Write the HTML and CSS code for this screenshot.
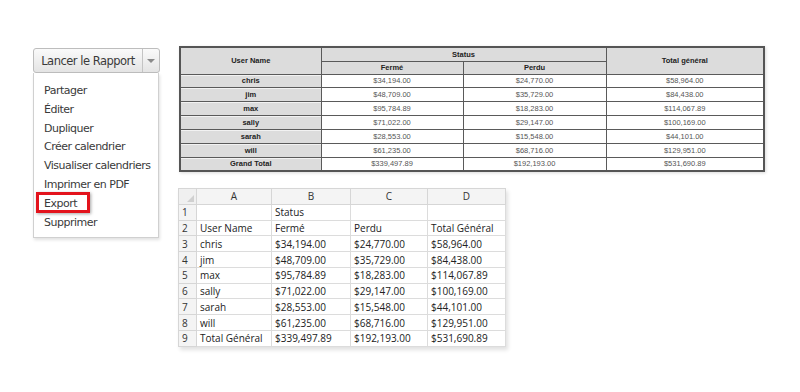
FILE: index.html
```html
<!DOCTYPE html>
<html lang="fr">
<head>
<meta charset="utf-8">
<title>Rapport</title>
<link rel="stylesheet" href="styles.css">
</head>
<body>
<div class="page">
  <div class="left">
    <div class="btn-group">
      <div class="btn-main">Lancer le Rapport</div>
      <div class="btn-caret"><span class="caret"></span></div>
    </div>
    <ul class="menu">
      <li>Partager</li>
      <li>Éditer</li>
      <li>Dupliquer</li>
      <li>Créer calendrier</li>
      <li>Visualiser calendriers</li>
      <li>Imprimer en PDF</li>
      <li class="hl">Export</li>
      <li>Supprimer</li>
    </ul>
  </div>
  <div class="right">
    <table class="report">
      <colgroup><col class="c1"><col class="c2"><col class="c3"><col class="c4"></colgroup>
      <thead>
        <tr class="h1"><th rowspan="2">User Name</th><th colspan="2">Status</th><th rowspan="2">Total général</th></tr>
        <tr class="h2"><th>Fermé</th><th>Perdu</th></tr>
      </thead>
      <tbody>
        <tr><th>chris</th><td>$34,194.00</td><td>$24,770.00</td><td>$58,964.00</td></tr>
        <tr><th>jim</th><td>$48,709.00</td><td>$35,729.00</td><td>$84,438.00</td></tr>
        <tr><th>max</th><td>$95,784.89</td><td>$18,283.00</td><td>$114,067.89</td></tr>
        <tr><th>sally</th><td>$71,022.00</td><td>$29,147.00</td><td>$100,169.00</td></tr>
        <tr><th>sarah</th><td>$28,553.00</td><td>$15,548.00</td><td>$44,101.00</td></tr>
        <tr><th>will</th><td>$61,235.00</td><td>$68,716.00</td><td>$129,951.00</td></tr>
        <tr><th>Grand Total</th><td>$339,497.89</td><td>$192,193.00</td><td>$531,690.89</td></tr>
      </tbody>
    </table>

    <table class="sheet">
      <colgroup><col class="rn"><col class="ca"><col class="cb"><col class="cc"><col class="cd"></colgroup>
      <thead>
        <tr><th class="corner"><span class="tri"></span></th><th>A</th><th>B</th><th>C</th><th>D</th></tr>
      </thead>
      <tbody>
        <tr><th>1</th><td></td><td>Status</td><td></td><td></td></tr>
        <tr><th>2</th><td>User Name</td><td>Fermé</td><td>Perdu</td><td>Total Général</td></tr>
        <tr><th>3</th><td>chris</td><td>$34,194.00</td><td>$24,770.00</td><td>$58,964.00</td></tr>
        <tr><th>4</th><td>jim</td><td>$48,709.00</td><td>$35,729.00</td><td>$84,438.00</td></tr>
        <tr><th>5</th><td>max</td><td>$95,784.89</td><td>$18,283.00</td><td>$114,067.89</td></tr>
        <tr><th>6</th><td>sally</td><td>$71,022.00</td><td>$29,147.00</td><td>$100,169.00</td></tr>
        <tr><th>7</th><td>sarah</td><td>$28,553.00</td><td>$15,548.00</td><td>$44,101.00</td></tr>
        <tr><th>8</th><td>will</td><td>$61,235.00</td><td>$68,716.00</td><td>$129,951.00</td></tr>
        <tr><th>9</th><td>Total Général</td><td>$339,497.89</td><td>$192,193.00</td><td>$531,690.89</td></tr>
      </tbody>
    </table>
  </div>
</div>
</body>
</html>
```

FILE: styles.css
```css
html, body {
  margin: 0;
  padding: 0;
  background: #ffffff;
}

.page {
  display: flex;
  align-items: flex-start;
  width: 800px;
  height: 392px;
  overflow: hidden;
}

.left {
  padding-left: 33px;
  padding-top: 48px;
  width: 127px;
  font-family: "DejaVu Sans", sans-serif;
  font-size: 11px;
  letter-spacing: -0.5px;
  color: #3a3a3a;
}

.btn-group {
  display: flex;
  height: 25px;
  box-sizing: border-box;
  border: 1px solid #bdbdbd;
  border-radius: 3px;
  background: linear-gradient(#fafafa, #e4e4e4);
}

.btn-main {
  width: 109px;
  box-sizing: border-box;
  border-right: 1px solid #c4c4c4;
  display: flex;
  align-items: center;
  justify-content: center;
  color: #3a3a3a;
  font-size: 11.5px;
}

.btn-caret {
  flex: 1;
  display: flex;
  align-items: center;
  justify-content: center;
}

.caret {
  width: 0;
  height: 0;
  border-left: 4px solid transparent;
  border-right: 4px solid transparent;
  border-top: 4px solid #8a8a8a;
}

.menu {
  list-style: none;
  margin: 0;
  padding: 9px 0 5px 10px;
  width: 126px;
  box-sizing: border-box;
  border: 1px solid #d0d0d0;
  border-top: none;
  box-shadow: 1px 2px 3px rgba(0,0,0,0.12);
  background: #fff;
}

.menu li {
  height: 18.8px;
  line-height: 18.8px;
  white-space: nowrap;
}

.menu li.hl {
  position: relative;
}

.menu li.hl::before {
  content: "";
  position: absolute;
  left: -8px;
  top: -3px;
  width: 54px;
  height: 21px;
  box-sizing: border-box;
  border: 3px solid #e3131c;
  box-shadow: 1px 1px 3px rgba(0,0,0,0.35);
}

.right {
  padding-left: 19px;
  padding-top: 46px;
  display: flex;
  flex-direction: column;
}

/* Report table */
.report {
  border-collapse: collapse;
  table-layout: fixed;
  width: 584px;
  border: 2px solid #555;
  box-shadow: 1px 1px 3px rgba(0,0,0,0.15);
  font-family: "Liberation Sans", Arial, sans-serif;
  font-size: 7.5px;
}

.report .c1 { width: 141px; }
.report .c2 { width: 142px; }
.report .c3 { width: 143px; }
.report .c4 { width: 158px; }

.report th, .report td {
  border: 1px solid #5a5a5a;
  padding: 0;
  text-align: center;
  vertical-align: middle;
}

.report th {
  background: #dcdcdc;
  color: #222;
  font-weight: bold;
}

.report tbody th {
  box-shadow: inset 0 1px 0 #f2f2f2;
}

.report td {
  background: #fff;
  color: #555;
}

.report .h1 { height: 14px; }
.report .h2 { height: 13px; }
.report tbody tr { height: 13.85px; }

/* Spreadsheet */
.sheet {
  margin-top: 16px;
  margin-left: -1px;
  border-collapse: collapse;
  table-layout: fixed;
  width: 327px;
  font-family: "Open Sans", sans-serif;
  font-size: 10px;
  color: #222;
  box-shadow: 2px 3px 4px rgba(0,0,0,0.12);
}

.sheet .rn { width: 18px; }
.sheet .ca { width: 75px; }
.sheet .cb { width: 79px; }
.sheet .cc { width: 77px; }
.sheet .cd { width: 78px; }

.sheet thead th {
  height: 15px;
  background: #f4f4f4;
  border: 1px solid #d6d6d6;
  font-weight: normal;
  color: #333;
  padding: 0;
  text-align: center;
}

.sheet thead th.corner {
  position: relative;
  background: #f0f0f0;
}

.tri {
  position: absolute;
  right: 2px;
  bottom: 2px;
  width: 0;
  height: 0;
  border-left: 7px solid transparent;
  border-bottom: 7px solid #d0d0d0;
}

.sheet tbody th {
  background: #f4f4f4;
  border: 1px solid #d6d6d6;
  font-weight: normal;
  text-align: left;
  padding: 0 0 0 3px;
  color: #333;
}

.sheet tbody tr { height: 15.75px; }

.sheet td {
  border: 1px solid #dcdcdc;
  padding: 0 0 0 3px;
  white-space: nowrap;
  background: #fff;
}
```
